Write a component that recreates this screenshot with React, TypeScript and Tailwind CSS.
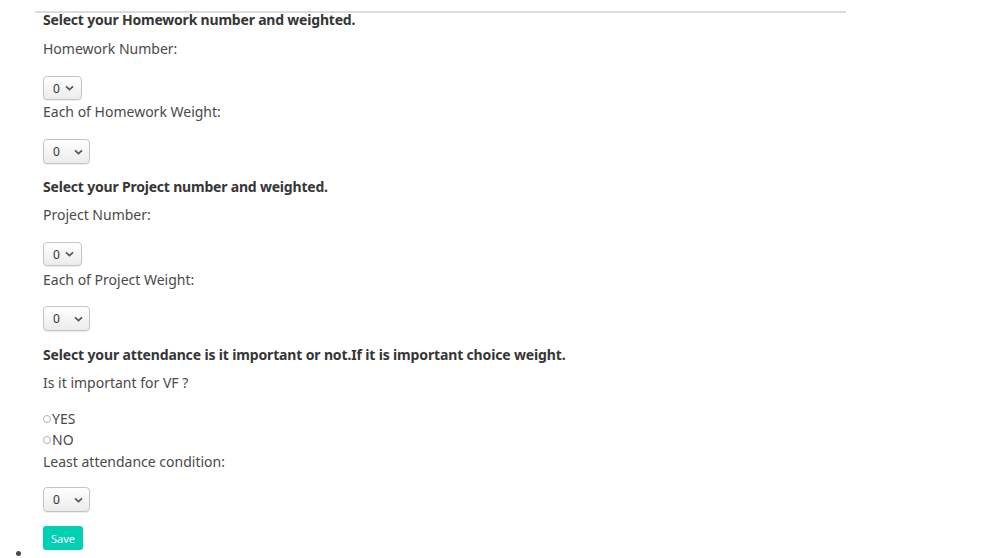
const Chevron = () => (
  <svg width="9" height="6" viewBox="0 0 9 6" className="text-[#555]">
    <path d="M1 1.3 L4.5 4.6 L8 1.3" fill="none" stroke="currentColor" strokeWidth="1.7" />
  </svg>
);

const Pick = ({ wide }: { wide?: boolean }) => (
  <div
    className={`flex items-center rounded-[4px] border border-[#c4c4c4] bg-gradient-to-b from-white to-[#ececec] text-[12px] text-[#333] shadow-[0_1px_1px_rgba(0,0,0,0.08)] ${
      wide ? "w-[47px] h-[25px] pl-[9px] gap-[14px]" : "w-[39px] h-[24px] pl-[9px] gap-[5px]"
    }`}
  >
    <span>0</span>
    <Chevron />
  </div>
);

const Radio = ({ label }: { label: string }) => (
  <label className="flex items-center h-[21px]">
    <span className="w-[8px] h-[8px] mr-[1px] rounded-full border border-[#b0b0b0] bg-white" />
    <span>{label}</span>
  </label>
);

const App = () => {
  return (
    <div className="bg-white min-h-screen text-[14px] leading-[21px] text-[#4a4a4a] font-['Noto_Sans',sans-serif]">
      <ul className="list-disc pl-[35px] pt-[11px]">
        <li className="list-none">
          <div className="w-[811px] h-[2px] bg-[#dcdcdc]" />
          <div className="pl-[8px]">
            <p className="font-bold text-[#363636] tracking-[-0.2px] mt-[-4px]">
              Select your Homework number and weighted.
            </p>
            <p className="mt-[8px]">Homework Number:</p>
            <div className="mt-[17px]">
              <Pick />
            </div>
            <p className="mt-[1px]">Each of Homework Weight:</p>
            <div className="mt-[17px]">
              <Pick wide />
            </div>

            <p className="font-bold text-[#363636] tracking-[-0.2px] mt-[12px]">
              Select your Project number and weighted.
            </p>
            <p className="mt-[7px]">Project Number:</p>
            <div className="mt-[17px]">
              <Pick />
            </div>
            <p className="mt-[3px]">Each of Project Weight:</p>
            <div className="mt-[16px]">
              <Pick wide />
            </div>

            <p className="font-bold text-[#363636] tracking-[-0.15px] mt-[13px]">
              Select your attendance is it important or not.If it is important choice weight.
            </p>
            <p className="mt-[7px]">Is it important for VF ?</p>
            <div className="mt-[15px]">
              <Radio label="YES" />
              <Radio label="NO" />
            </div>
            <p className="mt-[1px]">Least attendance condition:</p>
            <div className="mt-[15px]">
              <Pick wide />
            </div>
            <button className="mt-[14px] h-[24px] w-[40px] rounded-[3px] bg-[#00d1b2] text-white text-[11px]">
              Save
            </button>
          </div>
        </li>
        <li className="ml-[-2px] h-0 leading-[8px]">&nbsp;</li>
      </ul>
    </div>
  );
};

export default App;
